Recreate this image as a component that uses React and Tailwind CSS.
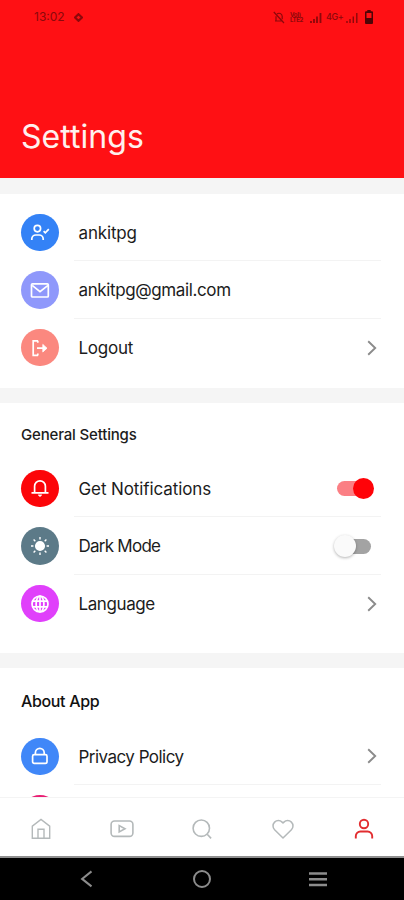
import React from 'react';

const icons = {
  user: (
    <>
      <circle cx="7.4" cy="6.6" r="3.2" />
      <path d="M1.8 18v-1.2a4 4 0 0 1 4-3.8h3.4a4 4 0 0 1 4 3.8V18M13.6 9.2l1.7 1.7 3.5-3.7" />
    </>
  ),
  mail: (
    <>
      <rect x="1.5" y="3.8" width="16.8" height="13.2" rx="1" />
      <path d="M2.2 5.4 10 11.6l8-6.2" />
    </>
  ),
  logout: (
    <>
      <path d="M8 2.8H3.2v14.6H8M7.8 2.8v2M7.8 17.4v-2M7 10.2h7" />
      <path d="M12.8 6.4 17 10.2l-4.2 3.8z" fill="currentColor" strokeWidth="0.8" />
    </>
  ),
  bell: (
    <>
      <path d="M4.6 14.4V8.2a5.4 5.4 0 0 1 10.8 0v6.2M1.5 14.9h17" />
      <path d="M8.3 17h3.4L10 18.6z" fill="currentColor" strokeWidth="0.8" />
    </>
  ),
  sun: (
    <>
      <circle cx="10" cy="10" r="4.2" fill="currentColor" />
      <path d="M10 1v2.4M10 16.6V19M1 10h2.4M16.6 10H19M3.6 3.6l1.7 1.7M14.7 14.7l1.7 1.7M16.4 3.6l-1.7 1.7M5.3 14.7l-1.7 1.7" strokeWidth="1.4" />
    </>
  ),
  globe: (
    <>
      <circle cx="10" cy="10" r="8" />
      <ellipse cx="10" cy="10" rx="3.9" ry="8" />
      <path d="M10 2v16M2.8 7.2h14.4M2.8 12.8h14.4" />
    </>
  ),
  lock: (
    <>
      <rect x="2.6" y="8.6" width="14.4" height="8.8" rx="1.6" />
      <path d="M5.4 8.4V6.8a4.4 4.4 0 0 1 8.8 0v1.6" />
    </>
  ),
};

const accountItems = [
  { label: 'ankitpg', icon: 'user', color: 'bg-[#3482f6]', spacing: 'tracking-[-0.15px]' },
  { label: 'ankitpg@gmail.com', icon: 'mail', color: 'bg-[#8f98fb]', spacing: 'tracking-[-0.38px]' },
  { label: 'Logout', icon: 'logout', color: 'bg-[#fb887f]', spacing: 'tracking-[-0.25px]', arrow: true },
];

const generalItems = [
  { label: 'Get Notifications', icon: 'bell', color: 'bg-[#fc0509]', spacing: 'tracking-[-0.1px]', toggle: 'on' },
  { label: 'Dark Mode', icon: 'sun', color: 'bg-[#5c7a88]', spacing: 'tracking-[-0.75px]', toggle: 'off' },
  { label: 'Language', icon: 'globe', color: 'bg-[#e040fb]', spacing: 'tracking-[-0.4px]', arrow: true },
];

const aboutItems = [
  { label: 'Privacy Policy', icon: 'lock', color: 'bg-[#4087f8]', spacing: 'tracking-[-0.53px]', arrow: true },
  { label: '', color: 'bg-[#e91e73]' },
];

const Toggle = ({ on }) => (
  <div className="relative mr-[9px] h-[22px] w-[35px]">
    <div className={on ? 'mt-[4px] h-[15px] w-[35px] rounded-full bg-[#fb7f84]' : 'mt-[4px] h-[15px] w-[34px] rounded-full bg-[#a3a3a3]'} />
    <div
      className={
        on
          ? 'absolute -right-[2px] top-[1px] h-[21px] w-[21px] rounded-full bg-[#ff0308]'
          : 'absolute -left-[3px] top-0 h-[22px] w-[22px] rounded-full bg-[#fafafa] shadow-[0_1px_3px_rgba(0,0,0,0.3)]'
      }
    />
  </div>
);

const SettingRow = ({ item, last }) => (
  <div className="flex h-[57.7px] shrink-0 items-center pl-[21px]">
    <div className={`flex h-[37.5px] w-[37.5px] shrink-0 items-center justify-center rounded-full text-white ${item.color}`}>
      {item.icon && (
        <svg className="h-5 w-5" viewBox="0 0 20 20" fill="none" stroke="currentColor" strokeWidth="1.7">
          {icons[item.icon]}
        </svg>
      )}
    </div>
    <div className={`ml-[15px] mr-[23px] flex h-full flex-1 items-center pl-[5px] pt-px ${last ? '' : 'border-b border-[#f3f3f3]'}`}>
      <span className={`flex-1 pt-[2px] text-[17px] text-[#1c1c1c] ${item.spacing || ''}`}>{item.label}</span>
      {item.arrow && (
        <svg className="mr-[4px] h-4 w-[10px]" viewBox="0 0 10 16" fill="none" stroke="#8b8b8b" strokeWidth="1.9">
          <path d="M1.2 1.3 8.2 8l-7 6.7" />
        </svg>
      )}
      {item.toggle && <Toggle on={item.toggle === 'on'} />}
    </div>
  </div>
);

const StatusBar = () => (
  <div className="flex h-[34px] items-center pl-[34px] pr-[31px] text-[#8c080b]">
    <span className="w-[32px] text-[12px]">13:02</span>
    <svg className="ml-[8px] h-[9px] w-[9px]" viewBox="0 0 9 9" fill="none" stroke="currentColor" strokeWidth="2.2">
      <path d="M4.5 1.2 8 4.5 4.5 7.8 1 4.5z" />
    </svg>
    <svg className="ml-auto h-[13px] w-[12px]" viewBox="0 0 12 13" fill="none" stroke="currentColor" strokeWidth="1.2">
      <path d="M.8 1 11 12M2 10h7M3 9.5V5.2M4 3a3.2 3.2 0 0 1 5.2 2.2v3" />
    </svg>
    <div className="ml-[5px] flex w-[13px] flex-col text-[6px] font-bold leading-[5.5px] tracking-[-0.3px]">
      <span>VoI)</span>
      <span>LTE2</span>
    </div>
    <svg className="ml-[7px] h-[11px] w-[12px]" viewBox="0 0 12 11" fill="none" stroke="currentColor" strokeWidth="1.8">
      <path d="M1 11V9M4 11V7M7 11V4.5M10.5 11V1" />
    </svg>
    <span className="ml-[4px] w-[17px] whitespace-nowrap text-[9px] font-medium tracking-[-0.5px]">4G+</span>
    <svg className="ml-[3px] h-[11px] w-[12px]" viewBox="0 0 12 11" fill="none" stroke="currentColor" strokeWidth="1.4">
      <path d="M1 11V9M4 11V7M7.3 11V4.5M10.8 11V1" />
    </svg>
    <svg className="ml-[7px] h-[14px] w-[8px] text-[#4d0507]" viewBox="0 0 8 14" fill="currentColor">
      <path fillRule="evenodd" d="M2.3 0h3.4v1.2H7a1 1 0 0 1 1 1V13a1 1 0 0 1-1 1H1a1 1 0 0 1-1-1V2.2a1 1 0 0 1 1-1h1.3zM1.5 3v5h5V3z" />
    </svg>
  </div>
);

const TabBar = () => (
  <nav className="flex h-[59px] shrink-0 items-center justify-around border-t border-[#f4f4f4] bg-white pl-[1px] pt-[4px] text-[#b4b9ba]">
    <svg className="h-6 w-6" viewBox="0 0 24 24" fill="none" stroke="currentColor" strokeWidth="1.4">
      <path d="M3.3 21.3V9.2L12 2.4l8.7 6.8v12.1zM9 21V12.2h6V21" />
    </svg>
    <svg className="h-6 w-6" viewBox="0 0 24 24" fill="none" stroke="currentColor" strokeWidth="1.6">
      <rect x="1.1" y="4" width="21.8" height="15.4" rx="3.4" />
      <path d="M9.2 8.6v6.4l5.8-3.2z" />
    </svg>
    <svg className="h-6 w-6" viewBox="0 0 24 24" fill="none" stroke="currentColor" strokeWidth="1.6">
      <circle cx="11.3" cy="11.2" r="8.2" />
      <path d="m17.2 17.2 3.9 4.2" />
    </svg>
    <svg className="h-6 w-6" viewBox="0 0 24 24" fill="none" stroke="currentColor" strokeWidth="1.5" strokeLinejoin="round">
      <path d="M12 21 3.6 12.8a5.5 5.5 0 0 1 0-7.7 5.3 5.3 0 0 1 7.5 0l.9.9.9-.9a5.3 5.3 0 0 1 7.5 0 5.5 5.5 0 0 1 0 7.7z" />
    </svg>
    <svg className="h-6 w-6" viewBox="0 0 24 24" fill="none" stroke="#e22d30" strokeWidth="1.9">
      <circle cx="12" cy="7" r="4.2" />
      <path d="M3.8 21.4v-2.3a4.6 4.6 0 0 1 4.6-4.6h7.2a4.6 4.6 0 0 1 4.6 4.6v2.3" />
    </svg>
  </nav>
);

const App = () => {
  return (
    <div className="flex h-[900px] w-[404px] flex-col overflow-hidden bg-white font-['Inter',sans-serif]">
      {/* Header */}
      <header className="h-[178px] shrink-0 bg-[#ff1014]">
        <StatusBar />
        <h1 className="mt-[83px] pl-[21px] text-[32px] leading-[40px] tracking-[0.05px] text-[#fff0ee]">Settings</h1>
      </header>

      {/* Setting groups */}
      <main className="flex min-h-0 flex-1 flex-col overflow-hidden bg-[#f5f5f5] pt-[16px]">
        <section className="h-[194px] shrink-0 bg-white pt-[9.5px]">
          {accountItems.map((item, index) => (
            <SettingRow key={index} item={item} last={index === accountItems.length - 1} />
          ))}
        </section>

        <section className="mt-[15px] h-[250px] shrink-0 bg-white">
          <h2 className="flex h-[56.5px] items-center pl-[21px] pt-[7px] text-[15px] font-medium tracking-[-0.17px] text-[#1c1c1c]">General Settings</h2>
          {generalItems.map((item, index) => (
            <SettingRow key={index} item={item} last={index === generalItems.length - 1} />
          ))}
        </section>

        <section className="mt-[15px] h-[180px] shrink-0 bg-white">
          <h2 className="flex h-[59.5px] items-center pl-[21px] pt-[7px] text-[16px] font-medium tracking-[-0.35px] text-[#111]">About App</h2>
          {aboutItems.map((item, index) => (
            <SettingRow key={index} item={item} last={index === aboutItems.length - 1} />
          ))}
        </section>
      </main>

      <TabBar />

      {/* System navigation */}
      <div className="flex h-[44px] shrink-0 items-center justify-around border-t-2 border-[#8f8f8f] bg-black pl-[29px] pr-[28px] text-[#8c8c8c]">
        <svg className="h-5 w-5" viewBox="0 0 20 20" fill="none" stroke="currentColor" strokeWidth="2">
          <path d="m14.5 2.4-9.4 7.5 9.4 7.5" />
        </svg>
        <svg className="h-5 w-5" viewBox="0 0 20 20" fill="none" stroke="currentColor" strokeWidth="2">
          <circle cx="10" cy="10" r="8" />
        </svg>
        <svg className="h-5 w-5" viewBox="0 0 20 20" fill="none" stroke="currentColor" strokeWidth="2.4">
          <path d="M1 4.5h18M1 10.2h18M1 16h18" />
        </svg>
      </div>
    </div>
  );
};

export default App;
